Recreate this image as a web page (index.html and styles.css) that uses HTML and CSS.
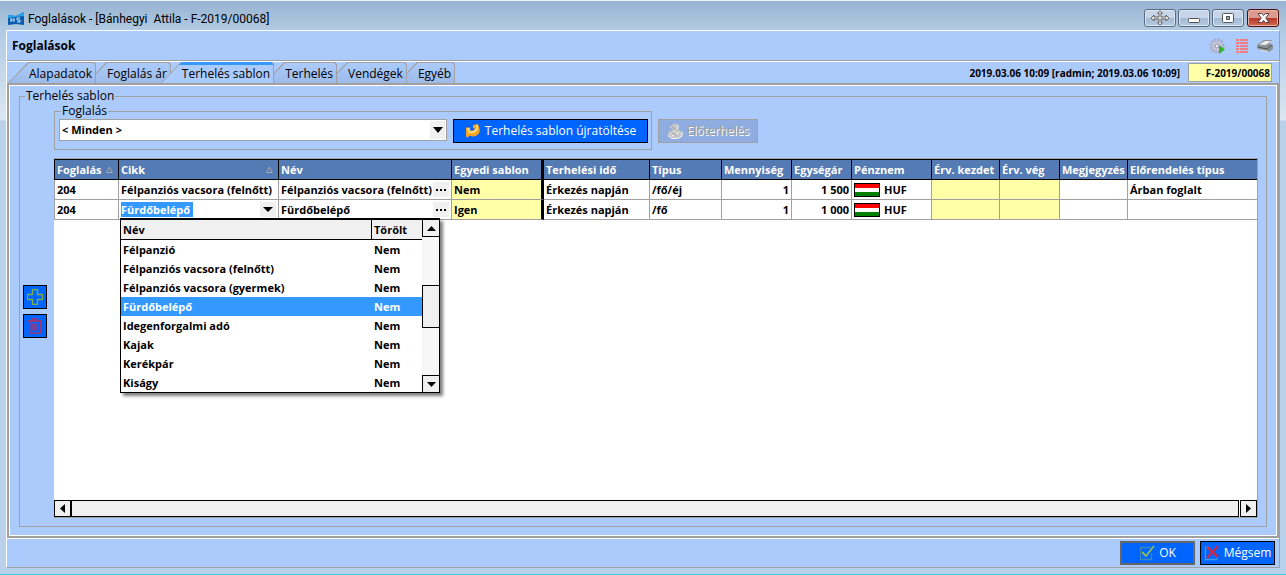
FILE: index.html
```html
<!DOCTYPE html>
<html lang="hu">
<head>
<meta charset="utf-8">
<title>Foglalások - [Bánhegyi Attila - F-2019/00068]</title>
<link rel="stylesheet" href="styles.css">
</head>
<body>
<div class="window">
  <header class="titlebar">
    <svg class="app-icon" width="16" height="14" viewBox="0 0 16 14"><path d="M0 3 8 4 16 0V13L8 12 0 13Z" fill="#0b5cad"/><path d="M0 3 8 4 16 0V4L0 6Z" fill="#27a3ec"/><path d="M3 6v4M6 6v4M3 8h3M12 6H9v2h3v2H9" fill="none" stroke="#cfe8ff"/></svg>
    <span class="window-title">Foglalások - [Bánhegyi&nbsp; Attila - F-2019/00068]</span>
    <div class="window-buttons">
      <button class="wbtn" aria-label="Mozgatás"><svg width="20" height="16" viewBox="0 0 20 16"><path d="M10 .8 12.500 3.300H11V7H16V5L19 8 16 11V9H11V12.700H12.500L10 15.200 7.500 12.700H9V9H4V11L1 8 4 5V7H9V3.300H7.500Z" fill="#e4e4e4" stroke="#666"/></svg></button>
      <button class="wbtn" aria-label="Kis méret"><svg width="12" height="14" viewBox="0 0 12 14"><rect x=".5" y="7.500" width="11" height="4" rx="1" fill="#fff" stroke="#555"/></svg></button>
      <button class="wbtn" aria-label="Teljes méret"><svg width="12" height="10" viewBox="0 0 12 10"><rect x=".5" y=".5" width="11" height="9" rx="1" fill="#fff" stroke="#555"/><rect x="4.500" y="3.500" width="3" height="3" fill="#9ab" stroke="#555"/></svg></button>
      <button class="wbtn close" aria-label="Bezárás"><svg width="13" height="10" viewBox="0 0 13 10"><path d="M1 .5H4.500L6.500 2.500 8.500 .5H12L8.800 5 12 9.500H8.500L6.500 7.500 4.500 9.500H1L4.200 5Z" fill="#fff" stroke="#5c4040"/></svg></button>
    </div>
  </header>

  <main class="client">
    <div class="heading">
      <h1>Foglalások</h1>
      <div class="tools">
        <svg width="18" height="16" viewBox="0 0 18 16"><circle cx="8" cy="8" r="6.500" fill="none" stroke="#a6a3bd" stroke-width="2" stroke-dasharray="2 1.400"/><circle cx="8" cy="8" r="4.500" fill="#cfd0e2" stroke="#bcbbd2" stroke-width="2"/><circle cx="8" cy="8" r="2" fill="#eef" stroke="#8d8ba8"/><path d="M10 7 16 11.500 10 16Z" fill="#35b32c"/></svg>
        <svg width="12" height="14" viewBox="0 0 12 14"><path d="M0 1H3M4 1H12M0 4H3M4 4H12M0 7H3M4 7H12M0 10H3M4 10H12M0 13H3M4 13H12" stroke="#f27c83" stroke-width="2"/></svg>
        <svg width="17" height="14" viewBox="0 0 17 14"><path d="M1 5 7 1H15L12 4 16 6V10L12 13 3 11 0 9V6Z" fill="#8b9296"/><path d="M2 5.500 8 2H14L9 6Z" fill="#e8ecee"/><path d="M1 8 10 10 15 6" fill="none" stroke="#4c5357"/><path d="M3 11 11 12.500" stroke="#e0e4e6"/></svg>
      </div>
    </div>

    <div class="tabbar">
      <nav class="tabs" role="tablist">
        <button class="tab" role="tab"><span>Alapadatok</span></button>
        <button class="tab" role="tab"><span>Foglalás ár</span></button>
        <button class="tab active" role="tab" aria-selected="true"><span>Terhelés sablon</span></button>
        <button class="tab" role="tab"><span>Terhelés</span></button>
        <button class="tab" role="tab"><span>Vendégek</span></button>
        <button class="tab" role="tab"><span>Egyéb</span></button>
      </nav>
      <span class="stamp">2019.03.06 10:09 [radmin; 2019.03.06 10:09]</span>
      <input class="code" type="text" value="F-2019/00068" aria-label="Foglalás kód" readonly>
    </div>

    <section class="page">
      <fieldset class="template">
        <legend>Terhelés sablon</legend>
        <div class="side">
          <button class="square" aria-label="Hozzáadás"><svg width="16" height="16" viewBox="0 0 16 16"><path d="M5.500 .5H10.500V5.500H15.500V10.500H10.500V15.500H5.500V10.500H.5V5.500H5.500Z" fill="none" stroke="#7dae4c" stroke-width="1.300"/></svg></button>
          <button class="square" aria-label="Törlés"><svg width="16" height="16" viewBox="0 0 16 16"><path d="M1 3H15M5.500 3V.8H10.500V3M2.800 3V15.200H13.200V3M6 5.500V12.500M8 5.500V12.500M10 5.500V12.500" fill="none" stroke="#b5305f" stroke-width="1.300"/></svg></button>
        </div>
        <div class="content">
          <div class="filters">
            <fieldset class="booking">
              <legend>Foglalás</legend>
              <div class="combo"><select aria-label="Foglalás"><option>&lt; Minden &gt;</option></select><span class="combo-arrow"><svg width="10" height="6" viewBox="0 0 10 6"><path d="M0 0H10L5 6Z"/></svg></span></div>
              <button class="btn reload"><svg width="16" height="16" viewBox="0 0 16 16"><path d="M1 4.500H5.500L4.500 7Q8 8.500 10 6L8 5V2L13 1Q16.500 8 13 11.500 9 15 4.500 12.500L2.500 15 1 13Z" fill="#f8a51b"/><path d="M2 6H4L4 9Q9 10.500 12 6V2" fill="none" stroke="#ffe08a" stroke-width="1.500"/></svg>Terhelés sablon újratöltése</button>
            </fieldset>
            <button class="btn pre" disabled><svg width="16" height="16" viewBox="0 0 16 16"><path d="M5 2Q8-1 11 2L11 6 15 9V13L11 15H5L1 12 2 8 6 7 4 5 2 5Z" fill="#c6c6c6"/><path d="M15 9V13L11 15.500H5L1 12.500M3 11 8 8M5 13 12 9M11 2V6" fill="none" stroke="#f8f8f8"/><path d="M5 4 8 6M4 9 9 12" stroke="#999"/></svg>Előterhelés</button>
          </div>

          <div class="grid">
            <table class="items">
              <colgroup><col class="c64"><col class="c160"><col class="c173"><col class="c92"><col class="c106"><col class="c72"><col class="c70"><col class="c60"><col class="c80"><col class="c68"><col class="c60"><col class="c68"><col></colgroup>
              <thead>
                <tr>
                  <th><div class="head">Foglalás<svg width="7" height="7" viewBox="0 0 7 7"><path d="M3.500 1 6.300 6.500H.7Z" fill="none" stroke="#a9a9a9"/></svg></div></th>
                  <th><div class="head">Cikk<svg width="7" height="7" viewBox="0 0 7 7"><path d="M3.500 1 6.300 6.500H.7Z" fill="none" stroke="#a9a9a9"/></svg></div></th>
                  <th>Név</th><th class="frozen">Egyedi sablon</th><th>Terhelési idő</th><th>Típus</th><th>Mennyiség</th><th>Egységár</th><th>Pénznem</th><th>Érv. kezdet</th><th>Érv. vég</th><th>Megjegyzés</th><th>Előrendelés típus</th>
                </tr>
              </thead>
              <tbody>
                <tr>
                  <td>204</td><td>Félpanziós vacsora (felnőtt)</td>
                  <td><div class="cell">Félpanziós vacsora (felnőtt)<button class="dots" aria-label="Tallózás"><i></i><i></i><i></i></button></div></td>
                  <td class="yellow frozen">Nem</td><td>Érkezés napján</td><td>/fő/éj</td><td class="num">1</td><td class="num">1 500</td>
                  <td><div class="money"><span class="flag"></span>HUF</div></td><td class="yellow"></td><td class="yellow"></td><td></td><td>Árban foglalt</td>
                </tr>
                <tr>
                  <td>204</td>
                  <td><div class="cell lookup"><input type="text" value="Fürdőbelépő" aria-label="Cikk"><button class="drop" aria-label="Lista"><svg width="10" height="5" viewBox="0 0 10 5"><path d="M0 0H10L5 5Z"/></svg></button>
                    <div class="popup">
                      <table class="list">
                        <colgroup><col><col class="c50"></colgroup>
                        <thead><tr><th>Név</th><th>Törölt</th></tr></thead>
                        <tbody>
                          <tr><td>Félpanzió</td><td>Nem</td></tr>
                          <tr><td>Félpanziós vacsora (felnőtt)</td><td>Nem</td></tr>
                          <tr><td>Félpanziós vacsora (gyermek)</td><td>Nem</td></tr>
                          <tr class="selected"><td>Fürdőbelépő</td><td>Nem</td></tr>
                          <tr><td>Idegenforgalmi adó</td><td>Nem</td></tr>
                          <tr><td>Kajak</td><td>Nem</td></tr>
                          <tr><td>Kerékpár</td><td>Nem</td></tr>
                          <tr><td>Kiságy</td><td>Nem</td></tr>
                        </tbody>
                      </table>
                      <div class="vscroll">
                        <button class="sbtn" aria-label="Fel"><svg width="9" height="5" viewBox="0 0 9 5"><path d="M0 5H9L4.500 0Z"/></svg></button>
                        <div class="track"></div><div class="vthumb"></div><div class="track"></div>
                        <button class="sbtn" aria-label="Le"><svg width="9" height="5" viewBox="0 0 9 5"><path d="M0 0H9L4.500 5Z"/></svg></button>
                      </div>
                    </div>
                  </div></td>
                  <td><div class="cell">Fürdőbelépő<button class="dots" aria-label="Tallózás"><i></i><i></i><i></i></button></div></td>
                  <td class="yellow frozen">Igen</td><td>Érkezés napján</td><td>/fő</td><td class="num">1</td><td class="num">1 000</td>
                  <td><div class="money"><span class="flag"></span>HUF</div></td><td class="yellow"></td><td class="yellow"></td><td></td><td></td>
                </tr>
              </tbody>
            </table>
            <div class="hscroll">
              <button class="sbtn" aria-label="Balra"><svg width="5" height="9" viewBox="0 0 5 9"><path d="M5 0V9L0 4.500Z"/></svg></button>
              <div class="hthumb"></div>
              <button class="sbtn" aria-label="Jobbra"><svg width="5" height="9" viewBox="0 0 5 9"><path d="M0 0V9L5 4.500Z"/></svg></button>
            </div>
          </div>
        </div>
      </fieldset>
    </section>

    <footer class="footer">
      <button class="btn ok"><svg width="16" height="16" viewBox="0 0 16 16"><path d="M12 2.500H1.500V14.500H12.500V8" fill="none" stroke="#3d86b8" stroke-width="1.300"/><path d="M3 7 7 11 15 1" fill="none" stroke="#8cc152" stroke-width="1.800"/></svg>OK</button>
      <button class="btn cancel"><svg width="16" height="16" viewBox="0 0 16 16"><path d="M6 2.500H1.500V14.500H12.500V13" fill="none" stroke="#3d9be0" stroke-width="1.300"/><path d="M3 2 14 12M14 1 3 13" stroke="#c92b4b" stroke-width="2.400"/></svg>Mégsem</button>
    </footer>
  </main>
</div>
</body>
</html>
```
FILE: styles.css
```css
* { box-sizing: border-box; }
body { margin: 0; font: 12px/14px "Open Sans", "Noto Sans", sans-serif; color: #000; }
button, input, select { font: inherit; color: inherit; margin: 0; padding: 0; border: 0; border-radius: 0; }
svg { display: block; flex: none; }
fieldset { margin: 0; min-width: 0; border: 1px solid #a0a0a0; }
legend { padding: 0 1px; margin-left: 2px; }

.window {
  min-height: 100vh; display: flex; flex-direction: column; padding: 0 6px 6px;
  background: linear-gradient(#97b3d0, #b2cbe4 30px, #dbe7f3 119px, #b9d1ea 120px);
  border-top: 1px solid #f0f5fa; border-bottom: 1px solid #2fd0e8;
}
.titlebar { height: 29px; display: flex; align-items: center; gap: 4px; padding: 6px 1px 0 2px; }
.window-title { flex: 1; font: 12px/16px Roboto, sans-serif; }
.window-buttons { display: flex; gap: 2px; align-self: flex-start; padding-top: 2px; }
.wbtn {
  width: 32px; height: 18px; display: flex; align-items: center; justify-content: center;
  border: 1px solid #5a6a7e; border-radius: 3px; box-shadow: inset 0 0 0 1px #dbe7f3;
  background: linear-gradient(#c6d6e8 50%, #a2b9d2 50%, #b6cce4);
}
.wbtn.close { margin-left: 1px; border-color: #4a1010; background: linear-gradient(#dc9a90 50%, #b8372a 50%, #cd6a50); box-shadow: inset 0 0 0 1px #e8b5a8; }

.client { flex: 1; display: flex; flex-direction: column; background: #accbfd; border: 1px solid #fff; border-right-color: #a0a0a0; border-bottom-color: #a0a0a0; }
.heading { height: 30px; display: flex; align-items: center; justify-content: space-between; padding: 0 5px; border-bottom: 1px solid #a0a0a0; }
h1 { margin: 0; font-size: 12px; line-height: 16px; }
.tools { display: flex; align-items: center; gap: 9px; }

.tabbar { height: 22px; display: flex; align-items: center; border-top: 1px solid #fff; padding: 0 7px 0 1px; }
.tabs { flex: 1; display: flex; align-self: stretch; isolation: isolate; }
.tab {
  position: relative; height: 21px; padding: 3px 4px 0 21px; margin-right: -10px; white-space: nowrap;
  background: #a0a0a0; clip-path: polygon(20px 0, calc(100% - 2px) 0, 100% 2px, 100% 100%, 0 100%);
}
.tab::before {
  content: ""; position: absolute; inset: 1px 1px 0 1px; background: linear-gradient(#abcbfc, #9dbbe8);
  clip-path: polygon(20px 0, calc(100% - 2px) 0, 100% 2px, 100% 100%, 0 100%);
}
.tab span { position: relative; }
.tab:nth-child(1) { z-index: 6; }
.tab:nth-child(2) { z-index: 5; }
.tab:nth-child(4) { z-index: 3; }
.tab:nth-child(5) { z-index: 2; }
.tab:nth-child(6) { z-index: 1; }
.tab.active { z-index: 7; min-width: 112px; }
.tab.active::before { inset: 0 1px 0 1px; background: linear-gradient(#3399ff 3px, #accbfd 3px); }
.stamp { font-size: 10px; font-weight: bold; margin-right: 8px; }
.code { width: 84px; height: 19px; padding: 0 1px; border: 1px solid #a0a0a0; background: #ffffa8; font-size: 10px; font-weight: bold; text-align: right; }

.page { flex: 1; display: flex; border: 2px solid #a0a0a0; box-shadow: inset 0 0 0 1px #fff; padding: 4px 10px 9px; }
.template { flex: 1; display: flex; padding: 1px 8px 8px 3px; }
.side { width: 31px; display: flex; flex-direction: column; justify-content: center; gap: 5px; }
.square { width: 24px; height: 24px; display: flex; align-items: center; justify-content: center; background: #0064ff; border: 1px solid #000; }
.content { flex: 1; min-width: 0; display: flex; flex-direction: column; gap: 8px; }
.filters { display: flex; align-items: flex-end; gap: 6px; }
.booking { width: 598px; display: flex; gap: 6px; padding: 1px 3px 6px 4px; }
.combo { position: relative; flex: 1; height: 22px; }
.combo select { width: 100%; height: 100%; padding: 0 2px; appearance: none; background: #fff; border: 1px solid #a0a0a0; font-size: 11px; font-weight: bold; }
.combo-arrow { position: absolute; top: 2px; right: 2px; bottom: 2px; width: 15px; display: flex; align-items: center; justify-content: center; background: #f0f0f0; pointer-events: none; }
.btn { height: 24px; display: flex; align-items: center; justify-content: center; gap: 4px; background: #0064ff; border: 1px solid #000; color: #fff; white-space: nowrap; }
.reload { width: 195px; }
.pre { width: 100px; margin-bottom: 7px; background: #8fade0; border-color: #a0a0a0; color: #a0a0a0; text-shadow: 1px 1px #fff; }

.grid { flex: 1; display: flex; flex-direction: column; justify-content: space-between; background: #fff; border: 1px solid #a0a0a0; border-left: 0; font-size: 11px; font-weight: bold; }
table { width: 100%; table-layout: fixed; border-collapse: separate; border-spacing: 0; }
th, td { padding: 0 2px; text-align: left; white-space: nowrap; }
.items > thead > tr > th { height: 21px; background: #557bb5; color: #fff; border: solid #000; border-width: 1px 1px 1px 0; }
.items > tbody > tr > td { height: 20px; border: solid #a0a0a0; border-width: 0 1px 1px 0; }
.items > thead > tr > th:first-child { border-left-width: 1px; }
.items > tbody > tr > td:first-child { border-left-width: 1px; }
.items > thead > tr > th:last-child, .items > tbody > tr > td:last-child { border-right: 0; }
.items > thead > tr > .frozen, .items > tbody > tr > .frozen { border-right: 3px solid #000; }
.items > tbody > tr > .num { text-align: right; }
.yellow { background: #ffffa8; }
.c50 { width: 50px; } .c60 { width: 60px; } .c64 { width: 65px; } .c68 { width: 68px; }
.c70 { width: 70px; } .c72 { width: 72px; } .c80 { width: 80px; } .c92 { width: 92px; }
.c106 { width: 106px; } .c160 { width: 160px; } .c173 { width: 173px; }
.head { display: flex; align-items: center; justify-content: space-between; padding-right: 3px; }
.cell { display: flex; align-items: center; justify-content: space-between; height: 19px; }
.dots { width: 16px; height: 15px; display: flex; align-items: center; justify-content: center; gap: 2px; background: #f0f0f0; }
.dots i { width: 2px; height: 2px; background: #000; }
.lookup { position: relative; }
.lookup input { width: 72px; height: 15px; background: #3399ff; color: #fff; }
.drop { width: 16px; height: 15px; display: flex; align-items: center; justify-content: center; background: #f0f0f0; }
.money { display: flex; align-items: center; gap: 4px; }
.flag { width: 26px; height: 14px; border: 1px solid #000; background: linear-gradient(#f00 4px, #fff 4px 8px, #008000 8px); }

.popup { position: absolute; z-index: 10; top: 18px; left: -1px; width: 320px; display: flex; background: #fff; border: 1px solid #000; border-top-width: 2px; box-shadow: 3px 3px 3px rgba(0, 0, 0, .5); }
.list { flex: 1; }
.list th { height: 20px; background: #f0f0f0; border: solid #000; border-width: 0 1px 1px 0; }
.list th:last-child { border-right: 0; }
.list td { height: 19px; }
.selected { background: #3399ff; color: #fff; outline: 1px dotted #c87a30; outline-offset: -1px; }
.vscroll { width: 17px; display: flex; flex-direction: column; }
.sbtn { flex: none; width: 17px; height: 17px; display: flex; align-items: center; justify-content: center; background: #f0f0f0; border: 1px solid #000; }
.vscroll .sbtn { border-right: 0; }
.vscroll .sbtn:first-child { border-top: 0; }
.vscroll .sbtn:last-child { border-bottom: 0; }
.track { flex: 1; background: #f7f7f7; }
.vthumb { height: 43px; background: #f0f0f0; border: solid #000; border-width: 1px 0 1px 1px; }
.hscroll { display: flex; }
.hthumb { flex: 1; margin-right: 1px; background: #f0f0f0; border: 1px solid #000; }

.footer { display: flex; justify-content: flex-end; gap: 5px; padding: 2px 4px 2px 3px; border-top: 1px solid #fff; }
.footer .btn { width: 75px; }
.ok { border: 2px solid #666; }
```
